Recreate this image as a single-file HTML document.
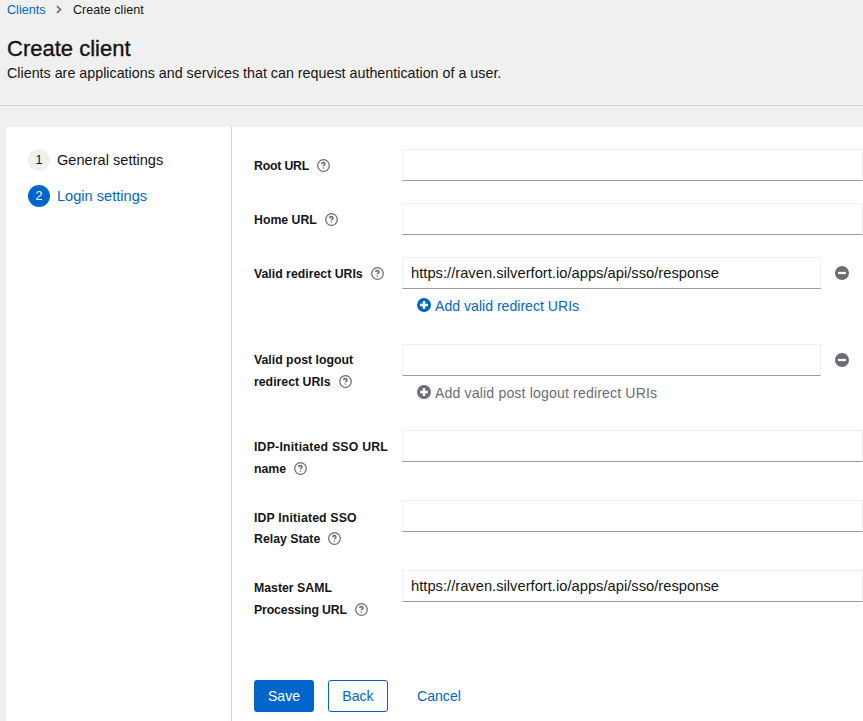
<!DOCTYPE html>
<html><head><meta charset="utf-8">
<style>
*{box-sizing:border-box;margin:0;padding:0}
html,body{width:863px;height:721px;overflow:hidden;background:#f0f0f0;font-family:"Liberation Sans",sans-serif;color:#151515}
.abs{position:absolute;white-space:nowrap}
.bc{top:1px;left:7px;font-size:12.6px;line-height:18px}
.bc a{color:#0066cc;text-decoration:none}
.title{left:7px;top:36px;font-size:22px;line-height:26px;-webkit-text-stroke:.35px #151515}
.desc{left:7px;top:64px;font-size:14.3px;line-height:18px;color:#151515}
.hr{left:0;top:105px;width:863px;height:1px;background:#d6d6d6}
.card{left:6px;top:127px;width:857px;height:594px;background:#fff}
.div{left:231px;top:127px;width:1px;height:594px;background:#d2d2d2}
.step{font-size:14.6px;line-height:18px}
.circ{position:absolute;width:22px;height:22px;border-radius:50%;text-align:center;font-size:12.6px;line-height:22px}
.lbl{font-size:12.3px;font-weight:700;line-height:21.6px}
.help{display:inline-block;width:13px;height:13px;vertical-align:-2px;margin-left:8px}
.inp{position:absolute;background:#fff;border:1px solid #f0f0f0;border-bottom-color:#9a9da0;height:32px}
.val{font-size:14.74px;line-height:30px;padding-left:8px;white-space:nowrap;color:#151515}
.add{font-size:14.1px;line-height:18px}
.addi{position:absolute;width:14px;height:14px}
.minus{position:absolute;width:14px;height:14px}
.btn{position:absolute;font-size:14.1px;text-align:center;border-radius:3px;height:32px;line-height:32px}
</style></head><body>
<svg width="0" height="0" style="position:absolute">
 <defs>
  <symbol id="q" viewBox="0 0 13 13"><circle cx="6.5" cy="6.5" r="5.8" fill="none" stroke="#6a6e73" stroke-width="1.25"/><path d="M4.7 5.1a1.6 1.45 0 1 1 2.4 1.2c-.45.28-.8.45-.8.85" fill="none" stroke="#6a6e73" stroke-width="1.6"/><circle cx="6.3" cy="8.95" r=".8" fill="#6a6e73"/></symbol>
  <symbol id="plus" viewBox="0 0 14 14"><circle cx="7" cy="7" r="7" fill="currentColor"/><rect x="3.1" y="5.75" width="7.8" height="2.5" fill="#fff"/><rect x="5.75" y="3.1" width="2.5" height="7.8" fill="#fff"/></symbol>
  <symbol id="minus" viewBox="0 0 14 14"><circle cx="7" cy="7" r="7" fill="#6a6e73"/><rect x="3" y="5.9" width="8" height="2.2" fill="#fff"/></symbol>
 </defs>
</svg>
<div class="abs bc"><a>Clients</a><span style="display:inline-block;width:27.5px"></span>Create client</div>
<svg style="position:absolute;left:55px;top:4px" width="8" height="11" viewBox="0 0 8 11"><path d="M1.9 2.1L5.5 5.5L1.9 8.9" fill="none" stroke="#72767b" stroke-width="1.8"/></svg>
<div class="abs title">Create client</div>
<div class="abs desc">Clients are applications and services that can request authentication of a user.</div>
<div class="abs hr"></div>
<div class="abs card"></div>
<div class="abs div"></div>

<div class="abs circ" style="left:28px;top:149px;background:#f0f0f0;color:#151515">1</div>
<div class="abs step" style="left:57px;top:151px;color:#151515">General settings</div>
<div class="abs circ" style="left:28px;top:185px;background:#0066cc;color:#fff">2</div>
<div class="abs step" style="left:57px;top:187px;color:#0066cc">Login settings</div>

<div class="abs lbl" style="left:254px;top:156.0px"><span style="letter-spacing:-.2px">Root URL</span><svg class="help"><use href="#q"/></svg></div>
<div class="inp" style="left:402px;top:149px;width:461px"></div>

<div class="abs lbl" style="left:254px;top:210.0px">Home URL<svg class="help"><use href="#q"/></svg></div>
<div class="inp" style="left:402px;top:203px;width:461px"></div>

<div class="abs lbl" style="left:254px;top:264.0px">Valid redirect URIs<svg class="help"><use href="#q"/></svg></div>
<div class="inp" style="left:402px;top:257px;width:419px"><div class="val">https://raven.silverfort.io/apps/api/sso/response</div></div>
<svg class="minus" style="left:835px;top:266px"><use href="#minus"/></svg>
<svg class="addi" style="left:417px;top:298px;color:#0066cc"><use href="#plus"/></svg>
<div class="abs add" style="left:435px;top:297px;color:#0066cc">Add valid redirect URIs</div>

<div class="abs lbl" style="left:254px;top:350.0px">Valid post logout<br>redirect URIs<svg class="help"><use href="#q"/></svg></div>
<div class="inp" style="left:402px;top:344px;width:419px"></div>
<svg class="minus" style="left:835px;top:353px"><use href="#minus"/></svg>
<svg class="addi" style="left:417px;top:385px;color:#6a6e73"><use href="#plus"/></svg>
<div class="abs add" style="left:435px;top:384px;color:#6a6e73;letter-spacing:.15px">Add valid post logout redirect URIs</div>

<div class="abs lbl" style="left:254px;top:437px"><span style="letter-spacing:.2px">IDP-Initiated SSO URL</span><br>name<svg class="help"><use href="#q"/></svg></div>
<div class="inp" style="left:402px;top:430px;width:461px"></div>

<div class="abs lbl" style="left:254px;top:507.5px"><span style="letter-spacing:.15px">IDP Initiated SSO</span><br>Relay State<svg class="help"><use href="#q"/></svg></div>
<div class="inp" style="left:402px;top:500px;width:461px"></div>

<div class="abs lbl" style="left:254px;top:578px">Master SAML<br><span style="letter-spacing:-.15px">Processing URL</span><svg class="help"><use href="#q"/></svg></div>
<div class="inp" style="left:402px;top:570px;width:461px"><div class="val">https://raven.silverfort.io/apps/api/sso/response</div></div>

<div class="btn" style="left:254px;top:680px;width:60px;background:#0066cc;color:#fff">Save</div>
<div class="btn" style="left:328px;top:680px;width:60px;border:1px solid #0066cc;color:#0066cc;line-height:30px">Back</div>
<div class="abs" style="left:417px;top:687px;font-size:14.1px;line-height:18px;color:#0066cc">Cancel</div>
</body></html>
